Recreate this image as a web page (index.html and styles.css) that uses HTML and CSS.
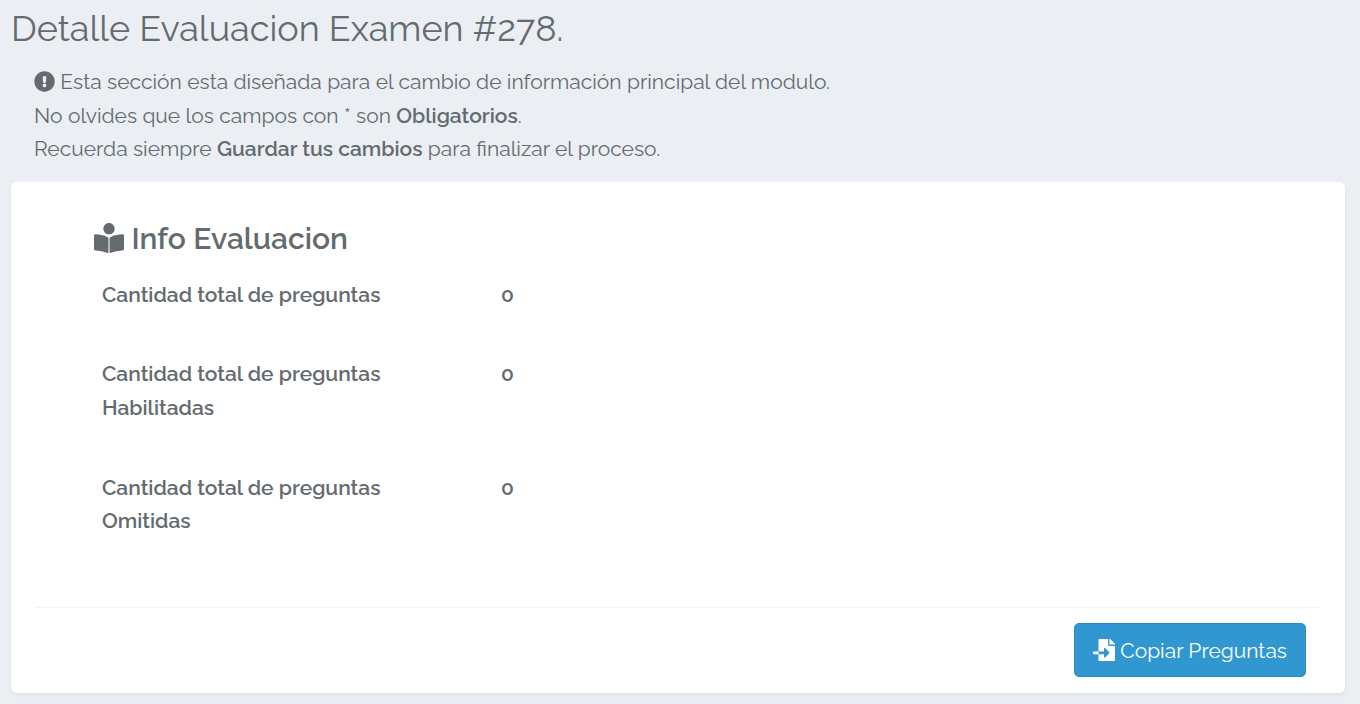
FILE: index.html
```
<!DOCTYPE html>
<html lang="es">
<head>
<meta charset="utf-8">
<meta name="viewport" content="width=device-width, initial-scale=1">
<title>Detalle Evaluacion Examen #278</title>
<link rel="stylesheet" href="styles.css">
</head>
<body>
<main class="page">
  <h1 class="page-title">Detalle Evaluacion Examen #278.</h1>
  <p class="intro">
    <svg class="icon icon-alert" viewBox="0 0 512 512" aria-hidden="true"><path fill="currentColor" d="M504 256c0 137-111 248-248 248S8 393 8 256 119 8 256 8s248 111 248 248zm-248 50a46 46 0 1 0 0 92 46 46 0 0 0 0-92zm-44-165 8 136c0 6 5 11 12 11h48c7 0 12-5 12-11l8-136c0-7-5-13-12-13h-64c-7 0-12 6-12 13z"/></svg>
    Esta sección esta diseñada para el cambio de información principal del modulo.<br>
    No olvides que los campos con * son <strong>Obligatorios</strong>.<br>
    Recuerda siempre <strong>Guardar tus cambios</strong> para finalizar el proceso.
  </p>
  <section class="card">
    <div class="card-body">
      <h2 class="card-title">
        <svg class="icon icon-reader" viewBox="0 0 512 512" aria-hidden="true"><path fill="currentColor" d="M352 96c0-53-43-96-96-96s-96 43-96 96 43 96 96 96 96-43 96-96zM233.600 241.100C174.500 205.200 79 195 26.100 192.100 11.800 191.300 0 202.600 0 216.900v226.200c0 13.100 10.500 24 23.600 24.700 46.200 2.500 143.600 12 207.400 43.200 9 4 16-2 16-12V263.500c0-9.500-5.200-17.400-13.400-22.400zM485.900 192.100C433 195 337.500 205.200 278.400 241.100c-8.200 5-13.400 13.200-13.400 22.700V499c0 10 7 16 16 12 63.800-31.200 161.200-40.700 207.400-43.200 13.100-.7 23.600-11.600 23.600-24.700V216.900c0-14.300-11.800-25.600-26.100-24.800z"/></svg>
        Info Evaluacion
      </h2>
      <table class="stats">
        <tbody>
          <tr><th scope="row">Cantidad total de preguntas</th><td>0</td></tr>
          <tr><th scope="row">Cantidad total de preguntas Habilitadas</th><td>0</td></tr>
          <tr><th scope="row">Cantidad total de preguntas Omitidas</th><td>0</td></tr>
        </tbody>
      </table>
    </div>
    <footer class="card-footer">
      <button class="btn" type="button">
        <svg class="icon icon-import" viewBox="0 0 512 512" aria-hidden="true"><path fill="currentColor" d="M16 288c-9 0-16 7-16 16v32c0 9 7 16 16 16h112v-64H16zm489-183L407 7c-5-5-11-7-17-7h-6v128h128v-6c0-6-2-12-7-17zm-153 31V0H152c-13 0-24 11-24 24v264h128v-65c0-14 17-21 27-11l95 96c7 7 7 17 0 24l-95 96c-10 10-27 3-27-11v-65H128v136c0 13 11 24 24 24h336c13 0 24-11 24-24V160H376c-13 0-24-11-24-24z"/></svg>
        Copiar Preguntas
      </button>
    </footer>
  </section>
</main>
</body>
</html>
```
FILE: styles.css
```
* {
  box-sizing: border-box;
}

body {
  margin: 0;
  background: #ebeff4;
  color: #636b6f;
  font-family: Raleway, "Open Sans", sans-serif;
  font-size: 21px;
  font-weight: 400;
  line-height: 1.6;
}

.page {
  padding: 8px 15px 11px 11px;
}

.page-title {
  margin: 0;
  font-size: 36px;
  font-weight: 400;
  line-height: 40px;
}

.intro {
  margin: 17px 23px 16px;
}

.intro strong {
  font-weight: 600;
}

.icon {
  display: inline-block;
  vertical-align: -3px;
}

.icon-alert {
  width: 21px;
  height: 21px;
}

.icon-reader {
  width: 30px;
  height: 30px;
  vertical-align: -4px;
}

.icon-import {
  width: 22px;
  height: 22px;
}

.card {
  padding: 41px 25px 16px;
  background: #fff;
  border-radius: 6px;
  box-shadow: 0 2px 4px rgba(0, 0, 0, 0.06);
}

.card-body {
  padding: 0 58px 31px;
}

.card-title {
  margin: 0 0 15px;
  font-size: 30px;
  font-weight: 600;
  line-height: 32px;
}

.stats {
  width: 520px;
  max-width: 100%;
  border-collapse: collapse;
  font-weight: 600;
}

.stats th,
.stats td {
  padding: 8px 8px 38px;
  font-weight: 600;
  text-align: left;
  vertical-align: top;
}

.stats th {
  width: 399px;
  padding-right: 96px;
}

.card-footer {
  display: flex;
  justify-content: flex-end;
  padding: 15px 14px 0;
  border-top: 1px solid #f4f4f4;
}

.btn {
  padding: 10px 18px 9px;
  border: 1px solid #2a88bd;
  border-radius: 5px;
  background: #3097d1;
  color: #fff;
  font: inherit;
  cursor: pointer;
}
```
